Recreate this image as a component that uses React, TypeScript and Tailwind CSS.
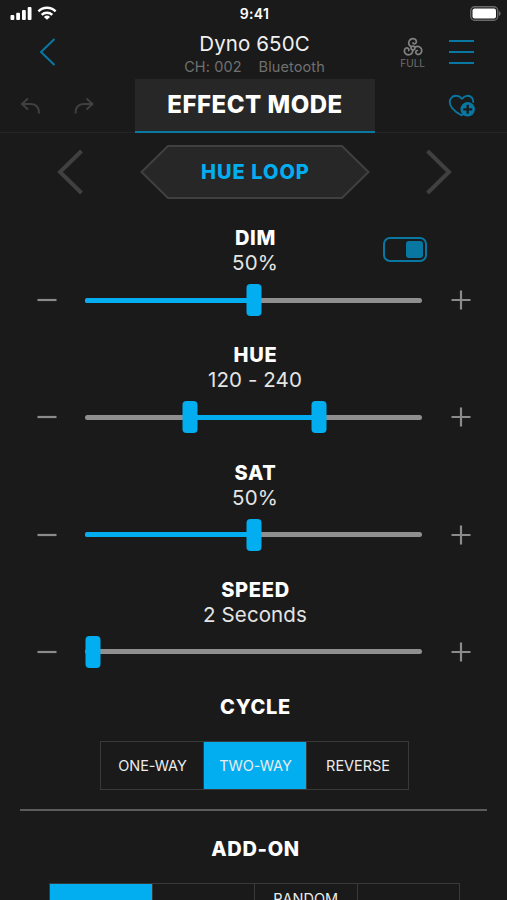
import { useState, type ReactNode } from 'react'
import clsx from 'clsx'

function StatusBar() {
  return (
    <div className="grid h-7 grid-cols-[1fr_60px_1fr] items-center pr-[6px] pl-[10px]">
      <div className="flex items-center gap-[5px] pb-[2px]">
        <svg width="22" height="14" viewBox="0 0 22 14" fill="#fff">
          <rect x="0.5" y="9" width="3.8" height="5" rx="1" />
          <rect x="6.2" y="6.8" width="3.8" height="7.2" rx="1" />
          <rect x="12" y="4" width="3.8" height="10" rx="1" />
          <rect x="17.7" y="1" width="3.8" height="13" rx="1" />
        </svg>
        <svg width="20" height="14" viewBox="0 0 20 14" fill="none" stroke="#fff" strokeWidth="2.5">
          <path d="M1.4 5.3a12.4 12.4 0 0 1 17.2 0" />
          <path d="M4.7 8.8a7.7 7.7 0 0 1 10.6 0" />
          <path d="M10 13.8 6.9 10.9a4.5 4.5 0 0 1 6.2 0z" fill="#fff" stroke="none" />
        </svg>
      </div>
      <span className="pr-[2px] text-center text-[14px] leading-7 font-semibold tracking-[0.3px] text-white">9:41</span>
      <svg className="mb-[2px] justify-self-end" width="31" height="15" viewBox="0 0 31 15">
        <rect x="0.75" y="0.75" width="27" height="13.5" rx="4" fill="none" stroke="#6b6b6b" strokeWidth="1.3" />
        <rect x="2.5" y="2.5" width="23.5" height="10" rx="2" fill="#fff" />
        <path d="M28.9 5v5c1-.4 1.7-1.4 1.7-2.5S29.9 5.400 28.900 5z" fill="#6b6b6b" />
      </svg>
    </div>
  )
}

const BLADE = 'M9.300 9.700C7.200 8.600 6.300 6.300 7.100 4.200c.9-2.300 3.700-3.300 5.700-2.100 1.900 1.100 2.100 3.400.5 4.400-.9.5-1.900.3-2.300-.5'

function FanIcon() {
  return (
    <svg width="22" height="20" viewBox="0 0 22 20" fill="none" stroke="#828282" strokeWidth="1.7" strokeLinecap="round">
      <circle cx="11" cy="11" r="1.9" />
      <path d={BLADE} />
      <path d={BLADE} transform="rotate(120 11 11)" />
      <path d={BLADE} transform="rotate(240 11 11)" />
    </svg>
  )
}

function Header() {
  return (
    <header className="flex h-[51px] justify-between pr-[33px] pl-[39px]">
      <button type="button" aria-label="Back" className="h-[48px] w-[92px]">
        <svg width="18" height="30" viewBox="0 0 18 30" fill="none" stroke="#0878a3" strokeWidth="2">
          <path d="M15.5 2 2 15l13.5 13" />
        </svg>
      </button>
      <div className="flex flex-col items-center pt-1">
        <h1 className="text-[20.5px] leading-6 tracking-[0.1px] text-[#f0f0f0]">Dyno 650C</h1>
        <p className="flex gap-[17px] text-[14.5px] leading-[22px] tracking-[0.1px] text-[#707070]">
          <span>CH: 002</span>
          <span>Bluetooth</span>
        </p>
      </div>
      <div className="flex w-[96px] justify-end gap-[24px]">
        <div className="flex flex-col items-center pt-[9px]">
          <FanIcon />
          <span className="text-[10px] leading-[13px] text-[#707070]">FULL</span>
        </div>
        <button type="button" aria-label="Menu" className="flex flex-col gap-[9px] pt-[12px]">
          <span className="h-[2px] w-[25px] bg-[#0878a3]" />
          <span className="h-[2px] w-[25px] bg-[#0878a3]" />
          <span className="h-[2px] w-[25px] bg-[#0878a3]" />
        </button>
      </div>
    </header>
  )
}

function ModeBar() {
  return (
    <div className="flex h-[54px] justify-between border-b border-[#242424]">
      <div className="flex w-[135px] items-center gap-[31px] pl-[20px]">
        <svg width="22" height="18" viewBox="0 0 22 18" fill="none" stroke="#404040" strokeWidth="2">
          <path d="M8 1.5 2 7l6 5.5M2.500 7H11c5 0 8 3.500 8 9.500" />
        </svg>
        <svg width="22" height="18" viewBox="0 0 22 18" fill="none" stroke="#404040" strokeWidth="2">
          <path d="M13.5 1.5 19.500 7l-6 5.500M19 7h-8.500c-5 0-8 3.500-8 9.500" />
        </svg>
      </div>
      <div className="h-[54px] w-[240px] border-b-[2.5px] border-[#0878a3] bg-[#272727] text-center text-[24px] leading-[52px] font-extrabold tracking-[0.5px] text-white">
        EFFECT MODE
      </div>
      <div className="flex w-[132px] items-center pl-[73px]">
        <svg width="28" height="24" viewBox="0 0 28 24" fill="none">
          <path
            d="M14 5C11.500 1 6 .8 3.300 3.800c-2.300 2.900-1.600 7 .8 10.200 2.500 3.300 5.900 5.600 9.400 7.300l3-1.500M14 5c2.500-4 7.500-4.200 10-1.200.9 1.300 1.300 3.200 1.200 4.900"
            stroke="#0878a3"
            strokeWidth="1.8"
          />
          <circle cx="19.7" cy="15.3" r="7.2" fill="#0878a3" />
          <path d="M19.700 10.800v9M15.200 15.300h9" stroke="#1a1a1a" strokeWidth="2.3" />
        </svg>
      </div>
    </div>
  )
}

function EffectPicker() {
  return (
    <div className="flex h-[78px] items-center justify-between pr-[54px] pl-[56px]">
      <svg width="28" height="46" viewBox="0 0 28 46" fill="none" stroke="#404040" strokeWidth="4">
        <path d="M25.5 2 4 23l21.5 21" />
      </svg>
      <div className="grid place-items-center">
        <svg className="col-start-1 row-start-1" width="230" height="56" viewBox="0 0 230 56">
          <path d="M28 2h174L228.500 28 202 54H28L1.500 28z" fill="#272727" stroke="#404040" strokeWidth="2" />
        </svg>
        <span className="col-start-1 row-start-1 pl-[2px] text-[20px] leading-6 font-extrabold tracking-[1px] text-[#02aeef]">
          HUE LOOP
        </span>
      </div>
      <svg width="28" height="46" viewBox="0 0 28 46" fill="none" stroke="#404040" strokeWidth="4">
        <path d="M2.5 2 24 23 2.500 44" />
      </svg>
    </div>
  )
}

function Heading({ children }: { children: ReactNode }) {
  return (
    <h2 className="pl-[4px] text-center text-[20px] leading-6 font-extrabold tracking-[0.7px] text-white">{children}</h2>
  )
}

interface SliderProps {
  label: string
  value: string
  /** Thumb centres in px along the track. */
  thumbs: number[]
  children?: ReactNode
}

function Slider({ label, value, thumbs, children }: SliderProps) {
  const from = thumbs.length > 1 ? thumbs[0] : 0
  const to = thumbs[thumbs.length - 1]

  return (
    <section className="relative h-[117.25px]">
      <Heading>{label}</Heading>
      <p className="pt-[1px] pl-[3px] text-center text-[20.5px] leading-6 tracking-[0.1px] text-[#e4e4e4]">{value}</p>
      <div className="mt-[9px] flex h-8 items-center justify-between px-[37px]">
        <svg width="20" height="20" viewBox="0 0 20 20" stroke="#8b8b8b" strokeWidth="2.2">
          <path d="M.5 10h19" />
        </svg>
        <div className="relative h-[5px] w-[337px] rounded-full bg-[#8f8f8f]">
          {/* hidden under the thumb when the value sits at the minimum */}
          {to > 10 && (
            <div
              className="absolute h-[5px] rounded-full bg-[#02aeef]"
              style={{ left: from, width: to - from }}
            />
          )}
          {thumbs.map((x) => (
            <div
              key={x}
              className="absolute top-[-13.5px] h-8 w-[15px] -translate-x-1/2 rounded-[4px] bg-[#02aeef]"
              style={{ left: x }}
            />
          ))}
        </div>
        <svg className="mr-[-1px] ml-[1px]" width="20" height="20" viewBox="0 0 20 20" stroke="#8b8b8b" strokeWidth="2.2">
          <path d="M.5 10h19M10 .5v19" />
        </svg>
      </div>
      {children}
    </section>
  )
}

function Toggle() {
  const [on, setOn] = useState(true)
  return (
    <button
      type="button"
      aria-pressed={on}
      onClick={() => setOn(!on)}
      className={clsx(
        'absolute top-[10.5px] left-[383px] flex h-[25px] w-[43.5px] items-center rounded-[7px] border-2 border-[#0878a3] px-[2px]',
        on ? 'justify-end' : 'justify-start',
      )}
    >
      <span className="h-[17px] w-[17px] rounded-[3px] bg-[#0878a3]" />
    </button>
  )
}

export default function App() {
  const [cycle, setCycle] = useState('TWO-WAY')

  return (
    <div className="h-[900px] w-[507px] overflow-hidden bg-[#1a1a1a] font-['Inter',sans-serif]">
      <StatusBar />
      <Header />
      <ModeBar />
      <EffectPicker />
      <div className="mt-[15px]">
        <Slider label="DIM" value="50%" thumbs={[168.5]}>
          <Toggle />
        </Slider>
        <Slider label="HUE" value="120 - 240" thumbs={[105, 233.5]} />
        <Slider label="SAT" value="50%" thumbs={[168.5]} />
        <Slider label="SPEED" value="2 Seconds" thumbs={[7.5]} />
      </div>
      <Heading>CYCLE</Heading>
      <div className="mt-[22px] ml-[100px] grid h-[49px] w-[309px] grid-cols-[103px_103px_1fr] border border-[#393939]">
        {['ONE-WAY', 'TWO-WAY', 'REVERSE'].map((name) => (
          <button
            key={name}
            type="button"
            onClick={() => setCycle(name)}
            className={clsx(
              'border-r border-[#393939] pl-[1px] text-[14.5px] tracking-[-0.05px] text-[#ececec] last:border-r-0',
              cycle === name && 'bg-[#02aeef]',
            )}
          >
            {name}
          </button>
        ))}
      </div>
      <hr className="mx-5 mt-[19px] border-t-2 border-[#5b5b5b]" />
      <div className="mt-[26px]">
        <Heading>ADD-ON</Heading>
      </div>
      <div className="mt-[22px] ml-[49px] flex h-[50px] w-[411px] border border-[#393939] text-center text-[14.5px] text-[#ececec]">
        <div className="flex-1 border-r border-[#393939] bg-[#02aeef]" />
        <div className="flex-1 border-r border-[#393939]" />
        <div className="flex-1 border-r border-[#393939] pt-[6px] leading-[18px]">RANDOM</div>
        <div className="flex-1" />
      </div>
    </div>
  )
}
